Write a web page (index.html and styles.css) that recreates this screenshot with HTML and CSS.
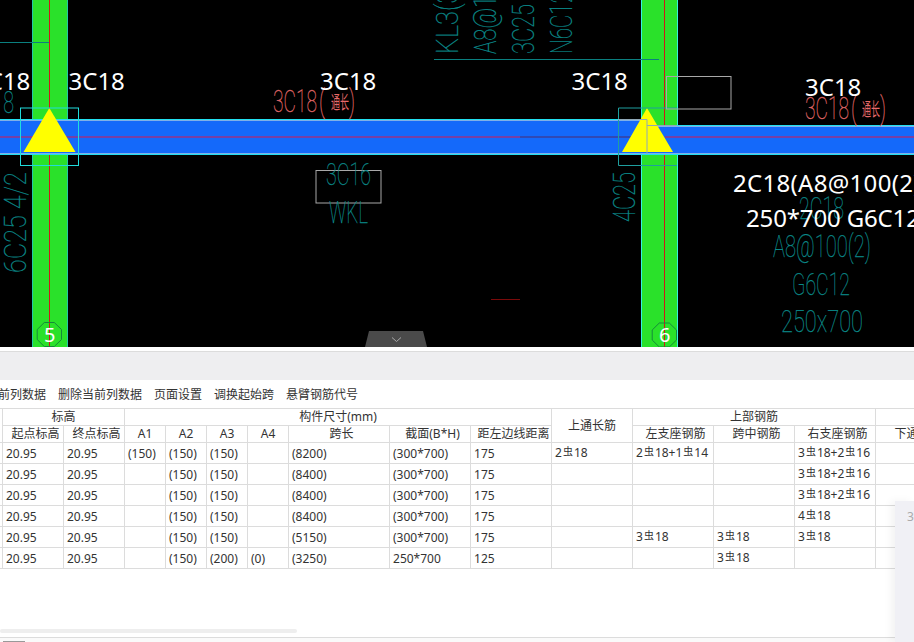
FILE: index.html
```html
<!DOCTYPE html>
<html lang="zh">
<head>
<meta charset="utf-8">
<title>梁平法表格</title>
<link rel="stylesheet" href="styles.css">
</head>
<body>
<div class="page">
  <section class="canvas">
    <svg class="drawing" width="914" height="347" viewBox="0 0 914 347" xmlns="http://www.w3.org/2000/svg">
      <!-- columns -->
      <rect class="green" x="32" y="0" width="36" height="347"/>
      <rect class="edge-a" x="32" y="0" width="1" height="347"/>
      <rect class="edge-a" x="67" y="0" width="1" height="347"/>
      <rect class="green" x="641" y="0" width="37" height="347"/>
      <rect class="edge-b" x="641" y="0" width="1" height="347"/>
      <rect class="edge-b" x="677" y="0" width="1" height="347"/>
      <rect class="red" x="49" y="0" width="1" height="347"/>
      <rect class="red" x="664" y="0" width="1" height="347"/>

      <!-- beam -->
      <rect class="beam" x="0" y="119" width="647" height="36"/>
      <rect class="beam" x="647" y="125" width="267" height="30"/>
      <rect class="cy" x="0" y="119" width="647" height="1"/>
      <rect class="soft" x="0" y="120" width="647" height="1"/>
      <rect class="cy" x="647" y="125" width="267" height="1"/>
      <rect class="soft" x="647" y="126" width="267" height="1"/>
      <rect class="soft" x="0" y="153" width="914" height="1"/>
      <rect class="cy" x="0" y="154" width="914" height="1"/>
      <rect class="mid-a" x="0" y="136.3" width="520" height="1.4"/>
      <rect class="mid-b" x="520" y="136.3" width="128" height="1.4"/>
      <rect class="mid-a" x="665" y="136.3" width="249" height="1.4"/>

      <!-- supports -->
      <polygon class="yellow" points="49.3,108 23.5,152 75.5,152"/>
      <polygon class="yellow" points="647,108 622,152 673,152"/>
      <rect class="box-a" x="20.5" y="108" width="58" height="57.5"/>
      <path class="box-b" d="M677 108H618.5V165.5H677"/>
      <path class="box-c" d="M618 119.5H647V154M647 125.5H677"/>

      <!-- leader lines -->
      <rect class="lead" x="0" y="42" width="49" height="1"/>
      <rect class="lead" x="434" y="59" width="225" height="1"/>
      <rect class="dark-red" x="491" y="299" width="29" height="1"/>
      <rect class="frame" x="316" y="170.5" width="65" height="32.5"/>
      <rect class="frame" x="666.5" y="76.5" width="64.5" height="32.5"/>

      <!-- axis bubbles -->
      <polygon class="axis" points="44.3,322.5 54.3,322.5 61.5,329.5 61.5,339.5 54.3,346.5 44.3,346.5 37.2,339.5 37.2,329.5"/>
      <polygon class="axis" points="659.3,323 669.3,323 676.5,330 676.5,340 669.3,347 659.3,347 652.2,340 652.2,330"/>
      <text class="axis-num" x="44" y="342">5</text>
      <text class="axis-num" x="659" y="342">6</text>

      <!-- CAD teal text -->
      <text class="cad teal" x="-31" y="113" textLength="45" lengthAdjust="spacingAndGlyphs">3C18</text>
      <text class="cad teal" x="326" y="185" textLength="45" lengthAdjust="spacingAndGlyphs">3C16</text>
      <text class="cad teal" x="329" y="223" textLength="39" lengthAdjust="spacingAndGlyphs">WKL</text>
      <text class="cad teal" x="799" y="219" textLength="45" lengthAdjust="spacingAndGlyphs">2C18</text>
      <text class="cad teal" x="773" y="257" textLength="98" lengthAdjust="spacingAndGlyphs">A8@100(2)</text>
      <text class="cad teal" x="792" y="295" textLength="58" lengthAdjust="spacingAndGlyphs">G6C12</text>
      <text class="cad teal" x="781" y="332" textLength="82" lengthAdjust="spacingAndGlyphs">250x700</text>
      <g transform="translate(26 273) rotate(-90)"><text class="cad teal" x="0" y="0" textLength="101" lengthAdjust="spacingAndGlyphs">6C25 4/2</text></g>
      <g transform="translate(635 222) rotate(-90)"><text class="cad teal" x="0" y="0" textLength="50" lengthAdjust="spacingAndGlyphs">4C25</text></g>
      <g transform="translate(458 54) rotate(-90)"><text class="cad teal" x="0" y="0" textLength="72" lengthAdjust="spacingAndGlyphs">KL3(3)</text></g>
      <g transform="translate(496 54) rotate(-90)"><text class="cad teal" x="0" y="0" textLength="108" lengthAdjust="spacingAndGlyphs">A8@100(2)</text></g>
      <g transform="translate(534 54) rotate(-90)"><text class="cad teal" x="0" y="0" textLength="50" lengthAdjust="spacingAndGlyphs">3C25</text></g>
      <g transform="translate(572 54) rotate(-90)"><text class="cad teal" x="0" y="0" textLength="62" lengthAdjust="spacingAndGlyphs">N6C12</text></g>

      <!-- CAD red text -->
      <text class="cad salmon" x="273" y="112" textLength="44" lengthAdjust="spacingAndGlyphs">3C18</text>
      <text class="cad salmon" x="319" y="112" textLength="6" lengthAdjust="spacingAndGlyphs">(</text>
      <text class="tong" x="331" y="109" textLength="18" lengthAdjust="spacingAndGlyphs">通长</text>
      <text class="cad salmon" x="349" y="112" textLength="6" lengthAdjust="spacingAndGlyphs">)</text>
      <text class="cad salmon" x="805" y="119" textLength="44" lengthAdjust="spacingAndGlyphs">3C18</text>
      <text class="cad salmon" x="851" y="119" textLength="6" lengthAdjust="spacingAndGlyphs">(</text>
      <text class="tong" x="862" y="116" textLength="18" lengthAdjust="spacingAndGlyphs">通长</text>
      <text class="cad salmon" x="880" y="119" textLength="6" lengthAdjust="spacingAndGlyphs">)</text>

      <!-- white labels -->
      <text class="label" x="-26" y="90">3C18</text>
      <text class="label" x="68.5" y="90">3C18</text>
      <text class="label" x="320" y="90">3C18</text>
      <text class="label" x="571.5" y="90">3C18</text>
      <text class="label" x="805" y="96">3C18</text>
      <text class="label wide" x="733" y="192">2C18(A8@100(2)</text>
      <text class="label tight" x="746" y="227">250*700 G6C12</text>
    </svg>
    <button class="handle" type="button" aria-label="收起">
      <svg width="62" height="16" viewBox="0 0 62 16" xmlns="http://www.w3.org/2000/svg">
        <polygon class="handle-bg" points="4,0 58,0 62,16 0,16"/>
        <path class="handle-chev" d="M27 6.5L31.5 10.5L36 6.5"/>
      </svg>
    </button>
  </section>

  <div class="band"></div>

  <nav class="toolbar">
    <span>复制当前列数据</span>
    <span>删除当前列数据</span>
    <span>页面设置</span>
    <span>调换起始跨</span>
    <span>悬臂钢筋代号</span>
  </nav>

  <div class="table-wrap">
    <table class="grid">
      <colgroup>
        <col class="c40"><col class="c61"><col class="c61"><col class="c41"><col class="c41"><col class="c41"><col class="c41"><col class="c101"><col class="c81"><col class="c81"><col class="c81"><col class="c81"><col class="c81"><col class="c81"><col class="c81">
      </colgroup>
      <thead>
        <tr class="head">
          <th rowspan="2"></th>
          <th colspan="2">标高</th>
          <th colspan="7">构件尺寸(mm)</th>
          <th rowspan="2">上通长筋</th>
          <th colspan="3">上部钢筋</th>
          <th></th>
        </tr>
        <tr class="head">
          <th class="sub">起点标高</th><th class="sub">终点标高</th>
          <th>A1</th><th>A2</th><th>A3</th><th>A4</th>
          <th class="sub">跨长</th><th class="sub">截面(B*H)</th><th class="sub">距左边线距离</th>
          <th class="sub">左支座钢筋</th><th class="sub">跨中钢筋</th><th class="sub">右支座钢筋</th>
          <th class="sub">下通长筋</th>
        </tr>
      </thead>
      <tbody>
        <tr><td></td><td>20.95</td><td>20.95</td><td>(150)</td><td>(150)</td><td>(150)</td><td></td><td>(8200)</td><td>(300*700)</td><td>175</td><td class="rb">2<span class="bar">虫</span>18</td><td class="rb">2<span class="bar">虫</span>18+1<span class="bar">虫</span>14</td><td></td><td class="rb">3<span class="bar">虫</span>18+2<span class="bar">虫</span>16</td><td></td></tr>
        <tr><td></td><td>20.95</td><td>20.95</td><td></td><td>(150)</td><td>(150)</td><td></td><td>(8400)</td><td>(300*700)</td><td>175</td><td></td><td></td><td></td><td class="rb">3<span class="bar">虫</span>18+2<span class="bar">虫</span>16</td><td></td></tr>
        <tr><td></td><td>20.95</td><td>20.95</td><td></td><td>(150)</td><td>(150)</td><td></td><td>(8400)</td><td>(300*700)</td><td>175</td><td></td><td></td><td></td><td class="rb">3<span class="bar">虫</span>18+2<span class="bar">虫</span>16</td><td></td></tr>
        <tr><td></td><td>20.95</td><td>20.95</td><td></td><td>(150)</td><td>(150)</td><td></td><td>(8400)</td><td>(300*700)</td><td>175</td><td></td><td></td><td></td><td class="rb">4<span class="bar">虫</span>18</td><td></td></tr>
        <tr><td></td><td>20.95</td><td>20.95</td><td></td><td>(150)</td><td>(150)</td><td></td><td>(5150)</td><td>(300*700)</td><td>175</td><td></td><td class="rb">3<span class="bar">虫</span>18</td><td class="rb">3<span class="bar">虫</span>18</td><td class="rb">3<span class="bar">虫</span>18</td><td></td></tr>
        <tr><td></td><td>20.95</td><td>20.95</td><td></td><td>(150)</td><td>(200)</td><td>(0)</td><td>(3250)</td><td>250*700</td><td>125</td><td></td><td></td><td class="rb">3<span class="bar">虫</span>18</td><td></td><td></td></tr>
      </tbody>
    </table>
  </div>

  <div class="scroll"><div class="thumb"></div></div>
  <footer class="foot"><div class="tab"></div></footer>

  <aside class="side">3</aside>
</div>
</body>
</html>
```
FILE: styles.css
```css
* { box-sizing: border-box; }
html, body { margin: 0; padding: 0; background: #fff; }
.page {
  position: relative;
  width: 914px;
  height: 642px;
  overflow: hidden;
  display: flex;
  flex-direction: column;
  font-family: "Noto Sans", "Noto Sans CJK SC", sans-serif;
  font-size: 12px;
  color: #333;
}

/* drawing */
.canvas { position: relative; flex: none; height: 347px; background: #000; overflow: hidden; }
.drawing { display: block; }
.green { fill: #2ae12a; }
.edge-a { fill: #22c8a8; }
.edge-b { fill: #35f0e0; }
.red { fill: #d01818; }
.beam { fill: #1469fa; }
.cy { fill: #22e0f0; }
.soft { fill: #7fb0e8; }
.mid-a { fill: #a0307f; }
.mid-b { fill: #3c3c96; }
.yellow { fill: #ffff00; }
.box-a { fill: none; stroke: #20dcdc; stroke-width: 1; }
.box-b { fill: none; stroke: #1f9f9f; stroke-width: 1; }
.box-c { fill: none; stroke: #8fa8b8; stroke-width: 1; }
.lead { fill: #0a7f7f; }
.dark-red { fill: #7a0a0a; }
.frame { fill: none; stroke: #a8a8a8; stroke-width: 1; }
.axis { fill: none; stroke: #148a3a; stroke-width: 1; }
.axis-num { fill: #fff; font-size: 20px; font-family: "Noto Sans", sans-serif; }
.cad { font-family: "Roboto", "Lato", sans-serif; font-weight: 100; font-size: 32px; }
.teal { fill: #0b8e8e; stroke: #0a8484; stroke-width: 0.25px; }
.salmon { fill: #f07070; stroke: #d86060; stroke-width: 0.3px; }
.tong {
  fill: #e86a6a;
  font-family: "Noto Sans CJK SC", sans-serif;
  font-weight: 400;
  font-size: 18px;
}
.label { fill: #fff; font-size: 24px; font-family: "Noto Sans", sans-serif; }
.wide { letter-spacing: 0.3px; }
.tight { letter-spacing: -0.15px; }
.handle {
  position: absolute;
  left: 365px;
  bottom: 0;
  width: 62px;
  height: 16px;
  padding: 0;
  border: 0;
  background: none;
}
.handle svg { display: block; }
.handle-bg { fill: #4a4a4a; }
.handle-chev { fill: none; stroke: #a8a8a8; stroke-width: 1; }

/* band */
.band {
  flex: none;
  height: 29px;
  margin-top: 4px;
  border-top: 1px solid #dcdcdc;
  background: #eeeef0;
}

/* toolbar */
.toolbar {
  flex: none;
  display: flex;
  gap: 12px;
  height: 28px;
  margin-left: -38px;
  align-items: center;
  white-space: nowrap;
}
.toolbar span { flex: none; }

/* table */
.table-wrap { flex: none; height: 221px; margin-left: -38px; overflow: visible; }
.grid {
  table-layout: fixed;
  width: 994px;
  border-collapse: collapse;
  line-height: 16px;
}
.c40 { width: 40px; }
.c41 { width: 41px; }
.c61 { width: 61px; }
.c81 { width: 81px; }
.c101 { width: 101px; }
.grid th, .grid td {
  border: 1px solid #dcdcdc;
  padding: 1px 0 0 3px;
  white-space: nowrap;
  overflow: hidden;
}
.grid td.rb { padding-top: 0; }
.grid th { font-weight: 400; text-align: center; padding: 0; }
.grid th.sub { padding-left: 5px; }
.head { height: 17px; }
tbody tr { height: 21px; }
.bar { font-size: 10px; margin: 0 1px; vertical-align: 2px; line-height: 10px; }

/* bottom */
.scroll { flex: none; height: 4px; }
.thumb { width: 297px; height: 4px; border-radius: 2px; background: #eeeeee; }
.foot {
  flex: none;
  height: 9px;
  margin-top: 4px;
  border-top: 1px solid #dcdcdc;
  background: #fafafa;
  padding: 3px 0 0 3px;
}
.tab { width: 22px; height: 2px; background: #999; }
.side {
  position: absolute;
  right: 0;
  top: 501px;
  bottom: 0;
  width: 19px;
  padding: 7px 0 0 12px;
  background: #f0f0f5;
  box-shadow: -4px 0 8px rgba(0, 0, 0, 0.05);
  color: #aaa;
  overflow: hidden;
}
```
